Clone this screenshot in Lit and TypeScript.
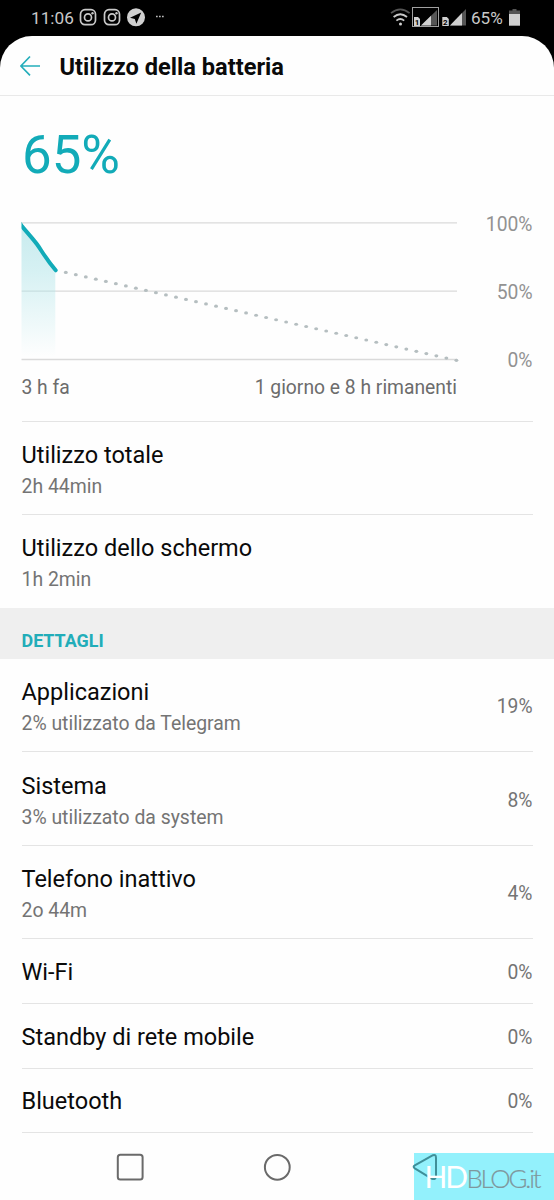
import { LitElement, html, css, svg } from "lit";
import { customElement, property } from "lit/decorators.js";

@customElement("usage-row")
class UsageRow extends LitElement {
  @property() label = "";
  @property() note = "";
  @property() value = "";

  static styles = css`
    :host { display: block; padding: 0 21.5px; }
    .row { box-sizing: border-box; height: 93.35px; padding-top: 4px; display: flex; align-items: center; justify-content: space-between; border-bottom: 1px solid #e4e4e4; }
    .single { height: 64.7px; padding-top: 2px; }
    :host([last]) .row { border-bottom-color: transparent; height: 92.6px; }
    .label { font-size: 23.5px; line-height: 30px; color: #0a0a0a; }
    .note { font-size: 19.4px; line-height: 26px; margin-top: 4px; color: #747474; }
    .value { font-size: 19.3px; line-height: 26px; color: #747474; }
    .single .value { padding-top: 2px; }
  `;

  render() {
    return html`<div class="row ${this.note ? "" : "single"}">
      <div>
        <div class="label">${this.label}</div>
        ${this.note ? html`<div class="note">${this.note}</div>` : ""}
      </div>
      <div class="value">${this.value}</div>
    </div>`;
  }
}

@customElement("app-root")
class AppRoot extends LitElement {
  static styles = css`
    :host { display: block; width: 554px; height: 1200px; overflow: hidden; background: #000; font-family: Roboto, sans-serif; position: relative; }
    svg { display: block; flex: none; }
    .status { height: 36px; display: flex; align-items: center; box-sizing: border-box; padding: 0 32px 0 31px; color: #c9c9c9; font-size: 17.2px; line-height: 22px; }
    .clock { width: 46px; }
    .notices { flex: 1; }
    .charge { width: 35px; font-size: 17.1px; }
    .page { height: 1164px; background: #fefefe; border-radius: 32px 32px 0 0; overflow: hidden; display: flex; flex-direction: column; }
    .header { flex: none; height: 60px; box-sizing: border-box; border-bottom: 1px solid #e9e9e9; display: flex; align-items: center; padding: 2px 20px 0; gap: 19.5px; }
    .header svg { margin-bottom: 2px; }
    .title { font-size: 23.6px; font-weight: 700; line-height: 30px; color: #0a0a0a; }
    .level { flex: none; box-sizing: border-box; padding: 28px 22px 0; height: 114px; font-size: 52.8px; line-height: 62px; color: #12abb8; }
    .chart { flex: none; display: grid; grid-template-columns: 435px 1fr; padding: 0 21.5px 0 22px; height: 151px; }
    .scale { display: flex; flex-direction: column; justify-content: space-between; height: 162px; padding-top: 2px; text-align: right; font-size: 19.3px; line-height: 26px; color: #929292; }
    .span { flex: none; box-sizing: border-box; display: flex; justify-content: space-between; width: 435.5px; margin: 0 21.5px; padding-top: 14px; height: 60px; font-size: 19.3px; line-height: 26px; color: #6c6c6c; }
    .rule { flex: none; height: 1px; background: #e4e4e4; margin: 0 21.5px; }
    .section { flex: none; height: 51.2px; box-sizing: border-box; background: #efefef; padding: 21.3px 21.5px 0; font-size: 17.9px; line-height: 24px; font-weight: 700; color: #22adb9; }
    .nav { flex: 1; display: flex; align-items: center; padding: 1px 116px 0; justify-content: space-between; }
    .watermark { position: absolute; left: 414px; top: 1153px; width: 140px; height: 47px; font-family: Lato, sans-serif; }
    .brand { font-size: 30px; letter-spacing: -2.2px; fill: #fff; }
    .site { font-size: 25.8px; font-weight: 300; letter-spacing: -2.2px; fill: #7f979c; stroke: #7f979c; stroke-width: 0.2px; }
  `;

  private camera() {
    return svg`<g fill="none" stroke="#c9c9c9" stroke-width="1.7"><rect x="1" y="1" width="15" height="15" rx="4.5"/><circle cx="8.5" cy="8.7" r="3.5"/></g><circle cx="13" cy="4.5" r="1.2" fill="#c9c9c9"/>`;
  }

  render() {
    const dots = Array.from({ length: 40 }, (_, i) => [43.8 + i * 10.015, 62.4 + i * 2.254]);
    return html`
      <div class="status">
        <div class="clock">11:06</div>
        <div class="notices">
          <svg width="90" height="36" viewBox="77 0 90 36">
            <g transform="translate(79.5 8.7)">${this.camera()}</g>
            <g transform="translate(103.5 8.7)">${this.camera()}</g>
            <circle cx="136" cy="17.3" r="9" fill="#d0d0d0"/>
            <path d="M141.2 12.5 130 17.8l4.8 1.3 1.6 4.6z" fill="#000"/>
            <path d="M156 16.5h1.7M159 16.5h1.7M162 16.5h1.7" stroke="#bbb" stroke-width="1.5"/>
          </svg>
        </div>
        <svg width="84" height="36" viewBox="387 0 84 36">
          <path d="M391 13.2Q400.3 5.5 409.6 13.2" fill="none" stroke="#555" stroke-width="1.7"/>
          <path d="M393.6 17Q400.3 11.4 407 17M396.4 20.6Q400.3 17.4 404.2 20.6" fill="none" stroke="#c9c9c9" stroke-width="1.8"/>
          <circle cx="400.5" cy="24" r="1.5" fill="#d0d0d0"/>
          <rect x="412.5" y="7.5" width="26" height="19" fill="none" stroke="#a0a0a0"/>
          <path d="M421 25.5 437 10v15.5z" fill="#555"/><path d="M421 25.5 431 15.8v9.7z" fill="#d0d0d0"/>
          <path d="M450 25.5 466 9v16.5z" fill="#555"/><path d="M450 25.5 462 13.1v12.4z" fill="#d0d0d0"/>
          <path d="M414 17h4l2 2v7h-6zM442.3 17h4.5l2 2v7h-6.5z" fill="#d0d0d0"/>
          <text x="414.8" y="24.6" font-size="8" font-weight="700" fill="#000">1</text>
          <text x="443.1" y="24.6" font-size="8" font-weight="700" fill="#000">2</text>
        </svg>
        <div class="charge">65%</div>
        <svg width="16" height="36" viewBox="506 0 16 36">
          <path d="M512.5 9h4v1.5h3.5V14h-11v-3.5h3.5z" fill="#555"/><path d="M509 14h11v11.7h-11z" fill="#d0d0d0"/>
        </svg>
      </div>
      <div class="page">
        <div class="header">
          <svg width="20" height="22" viewBox="0 0 20 22" fill="none" stroke="#25aebb" stroke-width="1.7"><path d="M20 11H1M10 1.5.9 11l9.1 9.3"/></svg>
          <div class="title">Utilizzo della batteria</div>
        </div>
        <div class="level">65%</div>
        <div class="chart">
          <svg width="440" height="151" viewBox="0 0 440 151" overflow="visible">
            <defs>
              <linearGradient id="fade" x1="0" y1="15" x2="0" y2="147" gradientUnits="userSpaceOnUse">
                <stop offset="0" stop-color="#c8ebee"/><stop offset="0.35" stop-color="#d6f1f3"/><stop offset="1" stop-color="#fefefe"/>
              </linearGradient>
              <clipPath id="plot"><rect x="-0.5" width="440" height="151"/></clipPath>
            </defs>
            <path d="M-.5 12.9H435M-.5 81.1H435M-.5 149.5H435" stroke="#dadada" stroke-width="1.4"/>
            <path d="M-.5 15.5 15 34 24 48 33.3 60V147H-.5z" fill="url(#fade)"/>
            <path d="M0 81.1h33.3" stroke="#c8dfe0" stroke-width="1.3"/>
            <g fill="#b5bec0">${dots.map(([x, y]) => svg`<ellipse cx=${x} cy=${y} rx="1.95" ry="1.6"/>`)}</g>
            <path d="M-2 13.5 0 16.3C5 22.5 10 27.5 15 34.3S24 49 33.7 60.3" fill="none" stroke="#12abb8" stroke-width="4" stroke-linecap="round" clip-path="url(#plot)"/>
          </svg>
          <div class="scale"><div>100%</div><div>50%</div><div>0%</div></div>
        </div>
        <div class="span"><div>3 h fa</div><div>1 giorno e 8 h rimanenti</div></div>
        <div class="rule"></div>
        <usage-row label="Utilizzo totale" note="2h 44min"></usage-row>
        <usage-row last label="Utilizzo dello schermo" note="1h 2min"></usage-row>
        <div class="section">DETTAGLI</div>
        <usage-row label="Applicazioni" note="2% utilizzato da Telegram" value="19%"></usage-row>
        <usage-row label="Sistema" note="3% utilizzato da system" value="8%"></usage-row>
        <usage-row label="Telefono inattivo" note="2o 44m" value="4%"></usage-row>
        <usage-row label="Wi-Fi" value="0%"></usage-row>
        <usage-row label="Standby di rete mobile" value="0%"></usage-row>
        <usage-row label="Bluetooth" value="0%"></usage-row>
        <div class="nav">
          <svg width="28" height="28" viewBox="0 0 28 28" fill="none" stroke="#6a6a6a" stroke-width="2"><rect x="1.8" y="1.8" width="24.8" height="24.8" rx="2.5"/></svg>
          <svg width="28" height="28" viewBox="0 0 28 28" fill="none" stroke="#6a6a6a" stroke-width="2"><circle cx="14.3" cy="14.3" r="12.4"/></svg>
          <svg width="28" height="28" viewBox="0 0 28 28"></svg>
        </div>
      </div>
      <svg class="watermark" viewBox="0 0 140 47" overflow="visible">
        <rect width="140" height="47" fill="#93f1fc"/>
        <path d="M19 2.2.8 12.3q-2.3 1.5 0 3L17.5 25.5Q22 27.5 22 23V5Q22 1 19 2.2z" fill="none" stroke="#3f8f99" stroke-width="2"/>
        <text class="brand" x="10.5" y="34.8">HD</text>
        <text class="site" x="52.5" y="34.8">BLOG.it</text>
      </svg>
    `;
  }
}
